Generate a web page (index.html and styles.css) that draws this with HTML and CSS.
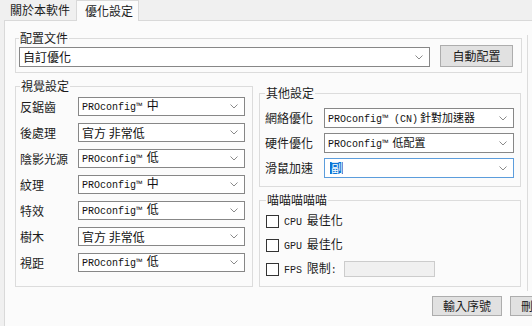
FILE: index.html
```html
<!DOCTYPE html>
<html lang="zh-Hant">
<head>
<meta charset="utf-8">
<title>優化設定</title>
<link rel="stylesheet" href="styles.css">
</head>
<body>
<div class="tabs">
  <div class="tab">關於本軟件</div>
  <div class="tab active">優化設定</div>
</div>
<div class="panel">
  <div class="main">
    <fieldset class="group g-profile">
      <legend>配置文件</legend>
      <div class="profile-row">
        <div class="select s-profile"><span class="val">自訂優化</span><svg class="chev" viewBox="0 0 8 5" width="8" height="5"><path d="M0.5 0.5 L4 4 L7.5 0.5"/></svg></div>
        <button class="btn b-auto">自動配置</button>
      </div>
    </fieldset>

    <div class="cols">
      <fieldset class="group g-visual">
        <legend>視覺設定</legend>
        <div class="rows rows-visual">
          <div class="row"><span class="lbl">反鋸齒</span><div class="select"><span class="val"><span class="en">PROconfig™</span> 中</span><svg class="chev" viewBox="0 0 8 5" width="8" height="5"><path d="M0.5 0.5 L4 4 L7.5 0.5"/></svg></div></div>
          <div class="row"><span class="lbl">後處理</span><div class="select"><span class="val">官方 非常低</span><svg class="chev" viewBox="0 0 8 5" width="8" height="5"><path d="M0.5 0.5 L4 4 L7.5 0.5"/></svg></div></div>
          <div class="row"><span class="lbl">陰影光源</span><div class="select"><span class="val"><span class="en">PROconfig™</span> 低</span><svg class="chev" viewBox="0 0 8 5" width="8" height="5"><path d="M0.5 0.5 L4 4 L7.5 0.5"/></svg></div></div>
          <div class="row"><span class="lbl">紋理</span><div class="select"><span class="val"><span class="en">PROconfig™</span> 中</span><svg class="chev" viewBox="0 0 8 5" width="8" height="5"><path d="M0.5 0.5 L4 4 L7.5 0.5"/></svg></div></div>
          <div class="row"><span class="lbl">特效</span><div class="select"><span class="val"><span class="en">PROconfig™</span> 低</span><svg class="chev" viewBox="0 0 8 5" width="8" height="5"><path d="M0.5 0.5 L4 4 L7.5 0.5"/></svg></div></div>
          <div class="row"><span class="lbl">樹木</span><div class="select"><span class="val">官方 非常低</span><svg class="chev" viewBox="0 0 8 5" width="8" height="5"><path d="M0.5 0.5 L4 4 L7.5 0.5"/></svg></div></div>
          <div class="row"><span class="lbl">視距</span><div class="select"><span class="val"><span class="en">PROconfig™</span> 低</span><svg class="chev" viewBox="0 0 8 5" width="8" height="5"><path d="M0.5 0.5 L4 4 L7.5 0.5"/></svg></div></div>
        </div>
      </fieldset>

      <div class="rightcol">
        <fieldset class="group g-other">
          <legend>其他設定</legend>
          <div class="rows rows-other">
            <div class="row"><span class="lbl">網絡優化</span><div class="select"><span class="val small"><span class="en">PROconfig™ (CN)</span>針對加速器</span><svg class="chev" viewBox="0 0 8 5" width="8" height="5"><path d="M0.5 0.5 L4 4 L7.5 0.5"/></svg></div></div>
            <div class="row"><span class="lbl">硬件優化</span><div class="select"><span class="val small"><span class="en">PROconfig™</span> 低配置</span><svg class="chev" viewBox="0 0 8 5" width="8" height="5"><path d="M0.5 0.5 L4 4 L7.5 0.5"/></svg></div></div>
            <div class="row"><span class="lbl">滑鼠加速</span><div class="select focused"><span class="val"><span class="sel">副</span></span><svg class="chev" viewBox="0 0 8 5" width="8" height="5"><path d="M0.5 0.5 L4 4 L7.5 0.5"/></svg></div></div>
          </div>
        </fieldset>

        <fieldset class="group g-meow">
          <legend>喵喵喵喵喵</legend>
          <div class="checks">
            <div class="check"><span class="box"></span><span class="ctext"><span class="en">CPU</span> 最佳化</span></div>
            <div class="check"><span class="box"></span><span class="ctext"><span class="en">GPU</span> 最佳化</span></div>
            <div class="check"><span class="box"></span><span class="ctext"><span class="en">FPS</span> 限制<span class="en">:</span></span><span class="fps-input"></span></div>
          </div>
        </fieldset>
      </div>
    </div>

    <div class="actions">
      <button class="btn b-foot">輸入序號</button>
      <button class="btn b-foot">刪除序號</button>
    </div>
  </div>
  <div class="side"></div>
</div>
</body>
</html>
```

FILE: styles.css
```css
* { box-sizing: border-box; }

html, body { margin: 0; padding: 0; }

body {
  width: 532px;
  height: 326px;
  overflow: hidden;
  background: #f0f0f0;
  font-family: "Noto Sans CJK TC", "Noto Sans CJK SC", sans-serif;
  font-size: 12px;
  color: #1b1b1b;
}

/* tabs */
.tabs {
  display: flex;
  height: 20px;
  padding-left: 4px;
  position: relative;
  z-index: 1;
}

.tab {
  height: 20px;
  line-height: 20px;
  padding: 0 6px;
  white-space: nowrap;
}

.tab.active {
  height: 21px;
  line-height: 20px;
  background: #fbfbfb;
  border: 1px solid #d9d9d9;
  border-bottom: none;
  padding: 0 5px 0 8px;
}

/* panel */
.panel {
  display: flex;
  margin-left: 4px;
  height: 306px;
  background: #fbfbfb;
  border-top: 1px solid #d9d9d9;
  border-left: 1px solid #d9d9d9;
  overflow: hidden;
}

.main {
  width: 522px;
  flex: none;
  padding-top: 10px;
}

.side {
  flex: none;
  width: 10px;
  height: 256px;
  margin-top: 14px;
  border-left: 1px solid #dcdcdc;
}

/* group boxes */
.group {
  margin: 0;
  min-width: 0;
  border: 1px solid #dcdcdc;
}

.group legend {
  padding: 0 1px;
  font-size: 12px;
  line-height: 14px;
}

.g-profile {
  margin-left: 10px;
  width: 507px;
  padding: 0 8px 5px 3px;
}

.profile-row {
  display: flex;
  align-items: flex-end;
  gap: 10px;
}

.cols {
  display: flex;
  align-items: flex-start;
  gap: 6px;
  margin: 6px 0 0 10px;
}

.g-visual {
  width: 238px;
  flex: none;
  padding: 4px 7px 14px 4px;
}

.rightcol {
  width: 262px;
  flex: none;
  display: flex;
  flex-direction: column;
}

.g-other {
  margin-top: 7px;
  padding: 8px 6px 8px 5px;
}

.g-meow {
  margin-top: 6px;
  padding: 3px 6px 6px 6px;
}

/* rows */
.rows {
  display: flex;
  flex-direction: column;
}

.rows-visual { gap: 7px; }
.rows-other { gap: 5px; }

.row {
  display: flex;
  align-items: center;
}

.rows-visual .lbl { width: 58px; flex: none; }
.rows-visual .select { width: 167px; height: 19px; }

.rows-other .lbl { width: 59px; flex: none; }
.rows-other .select { width: 190px; height: 20px; }

.lbl {
  font-size: 12px;
  line-height: 14px;
  white-space: nowrap;
}

/* combo boxes */
.select {
  display: flex;
  align-items: center;
  justify-content: space-between;
  background: #ffffff;
  border: 1px solid #878787;
  padding: 0 6px 0 3px;
  flex: none;
  overflow: hidden;
}

.s-profile {
  width: 411px;
  height: 20px;
}

.val {
  font-size: 12px;
  line-height: 14px;
  white-space: nowrap;
  color: #111;
}

.val.small { font-size: 11px; }

.en {
  font-family: "Liberation Mono", monospace;
  font-size: 10px;
  margin-right: 2px;
}

.chev {
  flex: none;
  fill: none;
  stroke: #8a8a8a;
  stroke-width: 1;
}

.select.focused {
  border-color: #5c9ddc;
}

.sel {
  display: inline-block;
  background: #0a74d6;
  color: #ffffff;
  line-height: 12px;
  padding: 0 0 0 1px;
  margin-left: 2px;
}

/* buttons */
.btn {
  font-family: "Noto Sans CJK TC", "Noto Sans CJK SC", sans-serif;
  font-size: 12px;
  line-height: 14px;
  color: #1b1b1b;
  background: #e1e1e1;
  border: 1px solid #adadad;
  padding: 0;
  flex: none;
}

.b-auto {
  width: 73px;
  height: 22px;
}

.actions {
  display: flex;
  gap: 8px;
  padding-left: 427px;
  margin-top: 9px;
}

.b-foot {
  width: 70px;
  height: 20px;
}

/* checkboxes */
.checks {
  display: flex;
  flex-direction: column;
  gap: 2px;
}

.check {
  display: flex;
  align-items: center;
  height: 22px;
}

.box {
  width: 13px;
  height: 13px;
  flex: none;
  border: 1px solid #333333;
  background: #ffffff;
}

.ctext {
  margin-left: 5px;
  font-size: 12px;
  line-height: 14px;
  white-space: nowrap;
}

.fps-input {
  width: 91px;
  height: 16px;
  flex: none;
  margin-left: 5px;
  background: #f0f0f0;
  border: 1px solid #cccccc;
}
```
